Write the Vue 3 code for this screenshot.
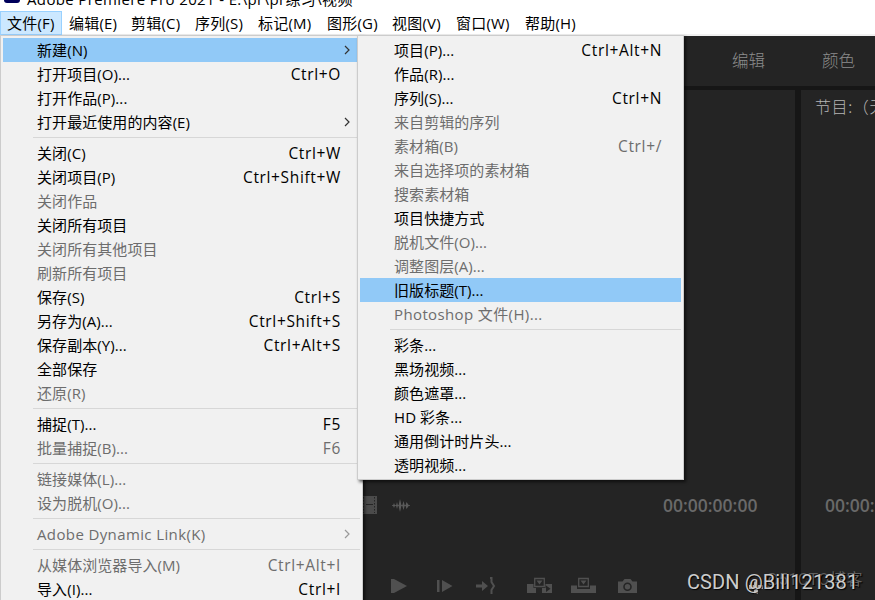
<script setup>
const menus = [
  { label: '文件(F)', w: 62, active: true },
  { label: '编辑(E)', w: 62 },
  { label: '剪辑(C)', w: 64 },
  { label: '序列(S)', w: 63 },
  { label: '标记(M)', w: 69 },
  { label: '图形(G)', w: 65 },
  { label: '视图(V)', w: 64 },
  { label: '窗口(W)', w: 69 },
  { label: '帮助(H)', w: 64 },
]
const sep = { sep: true }
const fileItems = [
  { t: '新建(N)', sub: true, hot: true },
  { t: '打开项目(O)...', k: 'Ctrl+O' },
  { t: '打开作品(P)...' },
  { t: '打开最近使用的内容(E)', sub: true },
  sep,
  { t: '关闭(C)', k: 'Ctrl+W' },
  { t: '关闭项目(P)', k: 'Ctrl+Shift+W' },
  { t: '关闭作品', off: true },
  { t: '关闭所有项目' },
  { t: '关闭所有其他项目', off: true },
  { t: '刷新所有项目', off: true },
  { t: '保存(S)', k: 'Ctrl+S' },
  { t: '另存为(A)...', k: 'Ctrl+Shift+S' },
  { t: '保存副本(Y)...', k: 'Ctrl+Alt+S' },
  { t: '全部保存' },
  { t: '还原(R)', off: true },
  sep,
  { t: '捕捉(T)...', k: 'F5' },
  { t: '批量捕捉(B)...', k: 'F6', off: true },
  sep,
  { t: '链接媒体(L)...', off: true },
  { t: '设为脱机(O)...', off: true },
  sep,
  { t: 'Adobe Dynamic Link(K)', sub: true, off: true, wide: true },
  sep,
  { t: '从媒体浏览器导入(M)', k: 'Ctrl+Alt+I', off: true },
  { t: '导入(I)...', k: 'Ctrl+I' },
]
const newItems = [
  { t: '项目(P)...', k: 'Ctrl+Alt+N' },
  { t: '作品(R)...' },
  { t: '序列(S)...', k: 'Ctrl+N' },
  { t: '来自剪辑的序列', off: true },
  { t: '素材箱(B)', k: 'Ctrl+/', off: true },
  { t: '来自选择项的素材箱', off: true },
  { t: '搜索素材箱', off: true },
  { t: '项目快捷方式' },
  { t: '脱机文件(O)...', off: true },
  { t: '调整图层(A)...', off: true },
  { t: '旧版标题(T)...', hot: true },
  { t: 'Photoshop 文件(H)...', off: true, wide: true },
  sep,
  { t: '彩条...' },
  { t: '黑场视频...' },
  { t: '颜色遮罩...' },
  { t: 'HD 彩条...' },
  { t: '通用倒计时片头...' },
  { t: '透明视频...' },
]
const popups = [
  { name: 'file', items: fileItems },
  { name: 'new', items: newItems },
]
</script>

<template>
  <div class="app">
    <header class="titlebar">
      <span class="logo"></span>
      <span class="title">Adobe Premiere Pro 2021 - E:\pr\pr练习\视频</span>
    </header>
    <nav class="menubar">
      <div v-for="m in menus" :key="m.label" class="menu" :class="{ active: m.active }" :style="{ width: m.w + 'px' }">{{ m.label }}</div>
    </nav>
    <main class="workspace">
      <div class="tabs"><span>编辑</span><span>颜色</span></div>
      <div class="panels">
        <section class="source">
          <div class="info">
            <svg class="film" width="14" height="18" viewBox="0 0 14 18">
              <path fill="#4b4b4b" d="M0 0h14v18H0z" />
              <path stroke="#252525" stroke-dasharray="1.5 1.5" d="M.5 1v16M11.5 1v16" />
              <path stroke="#252525" d="M3 8.5h7" />
            </svg>
            <svg class="wave" width="20" height="14" viewBox="0 0 20 14">
              <path stroke="#505050" d="M1 7.500h18" />
              <path fill="#5a5a5a" d="M9 1l1.500 6.500L9 14 7.500 7.500zM12.500 3l1.300 4.500-1.300 4.500-1.300-4.500zM15.500 4l2.500 3.500-2.500 3.500-1-3.500zM6 4l1 3.500L6 11 5 7.500zM3 5l1 2.500L3 10 2 7.500z" />
            </svg>
            <span class="time">00:00:00:00</span>
          </div>
          <div class="controls">
            <svg width="250" height="20" viewBox="0 0 250 20" fill="#505050">
              <path d="M1 4h3l13 7-13 7H1z" />
              <path d="M47 5h2.500v12H47zM52 5l10.500 6L52 17z" />
              <path d="M86 9.500h6V6l6 5-6 5v-3.500h-6z" />
              <path d="M100 3h1.500v4l2.500 4-2.500 4v4" fill="none" stroke="#505050" stroke-width="2" />
              <path d="M137 9h25v9h-25z" />
              <path d="M146 13h6v5h-6zM156 10.500l4.500 3.300-4.500 3.300z" fill="#252525" />
              <path d="M143.500 2h12v11h-12z" fill="#252525" />
              <path d="M144.700 3.500h9.600v8h-9.600z" fill="none" stroke="#505050" stroke-width="1.300" />
              <path d="M146.500 5.500h6l-3 4z" />
              <path d="M181 10.500h25V18h-25z" />
              <path d="M187 10h13v4h-13z" fill="#252525" />
              <path d="M188.700 3.500h9.600v8h-9.600z" fill="#252525" stroke="#505050" stroke-width="1.300" />
              <path d="M190.500 5.500h6l-3 4z" />
              <path d="M228 6.500h4.500l2-2.500h6l2 2.500h4.500V18h-19z" />
              <circle cx="237.500" cy="11.700" r="3.500" fill="none" stroke="#252525" stroke-width="1.600" />
            </svg>
          </div>
        </section>
        <section class="program">
          <div class="ptitle">节目:（无序列）</div>
          <div class="time">00:00:00:00</div>
        </section>
      </div>
    </main>

    <div v-for="p in popups" :key="p.name" class="popup" :class="p.name">
      <template v-for="(it, i) in p.items" :key="i">
        <div v-if="it.sep" class="sep"></div>
        <div v-else class="item" :class="{ hot: it.hot, off: it.off }">
          <span class="label" :class="{ wide: it.wide }">{{ it.t }}</span>
          <span v-if="it.k" class="key">{{ it.k }}</span>
          <svg v-if="it.sub" class="arrow" width="7" height="10" viewBox="0 0 7 10"><path d="M1 1l4 4-4 4" fill="none" stroke="currentColor" stroke-width="1.200" /></svg>
        </div>
      </template>
    </div>

    <div class="mark small">@51CTO博客</div>
    <svg class="plus" width="14" height="14" viewBox="0 0 14 14"><path d="M5 0h4v4h5v4H9v5H5V8H0V4h5z" fill="#b5b5b5" /></svg>
    <div class="mark">CSDN @Bill121381</div>
  </div>
</template>

<style>
body { margin: 0; overflow: hidden; }
</style>

<style scoped>
.app { position: relative; width: 875px; height: 600px; overflow: hidden; background: #fff; font: 15px/24px "Open Sans", "Noto Sans CJK SC", sans-serif; color: #000; white-space: nowrap; display: flex; flex-direction: column; }
.titlebar { height: 11px; flex: none; overflow: hidden; display: flex; align-items: flex-end; padding-left: 4px; gap: 7px; }
.logo { width: 16px; height: 16px; margin-bottom: 8px; background: #00005b; border-radius: 3px; flex: none; }
.title { line-height: 24px; letter-spacing: .36px; }
.menubar { display: flex; height: 23px; flex: none; border-bottom: 2px solid #f0f0f0; }
.menu { box-sizing: border-box; padding-left: 7px; height: 24px; line-height: 25px; letter-spacing: .2px; }
.menu.active { background: #cce8ff; border: 1px solid #99d1ff; padding-left: 6px; line-height: 23px; }
.workspace { flex: 1; background: #161616; display: flex; flex-direction: column; gap: 4px; min-height: 0; }
.tabs { height: 50px; background: #242424; display: flex; gap: 57px; padding-left: 732px; color: #8c8c8c; font-size: 16.5px; line-height: 48px; font-weight: 300; font-family: "Noto Sans CJK SC", sans-serif; }
.panels { flex: 1; display: grid; grid-template-columns: 795px 1fr; gap: 6px; }
.source, .program { background: #242424; display: flex; flex-direction: column; overflow: hidden; }
.source { padding-left: 363px; }
.info { margin-top: 403px; height: 24px; display: flex; align-items: center; }
.wave { margin-left: 14px; }
.time { font-size: 17.5px; font-weight: 600; color: #696969; }
.info .time { margin-left: 252px; }
.controls { margin-top: 58px; padding-left: 27px; display: flex; }
.ptitle { padding: 4px 0 0 14px; font-size: 16px; font-weight: 300; color: #b5b5b5; letter-spacing: .6px; font-family: "Noto Sans CJK SC", sans-serif; }
.program .time { margin-top: 375px; padding-left: 24px; }
.popup { position: absolute; box-sizing: border-box; background: #f1f1f1; border: 1px solid #ccc; top: 35px; padding: 2px; box-shadow: 2px 2px 3px rgba(0, 0, 0, .6); }
.file { left: 0; width: 363px; height: 620px; }
.new { left: 357px; width: 327px; height: 445px; }
.item { height: 24px; display: flex; justify-content: space-between; padding-left: 34px; padding-right: 19px; position: relative; }
.hot { background: #91c9f7; }
.off { color: #6d6d6d; }
.sep { height: 1px; margin: 3px 0 3px 30px; background: #d7d7d7; }
.label { letter-spacing: .07px; }
.label.wide { letter-spacing: .38px; }
.key { font-size: 15.5px; letter-spacing: .65px; }
.arrow { position: absolute; right: 9px; top: 7px; color: #333; }
.off .arrow { color: #999; }
.mark { position: absolute; left: 687px; top: 570px; font: 20px/24px Roboto, "Noto Sans CJK SC", sans-serif; letter-spacing: .1px; color: #ccc; text-shadow: 1px 1px 1px #000; }
.mark.small { left: 764px; top: 568px; font-size: 16px; letter-spacing: .5px; color: #606060; }
.plus { position: absolute; left: 749px; top: 581px; }
</style>
